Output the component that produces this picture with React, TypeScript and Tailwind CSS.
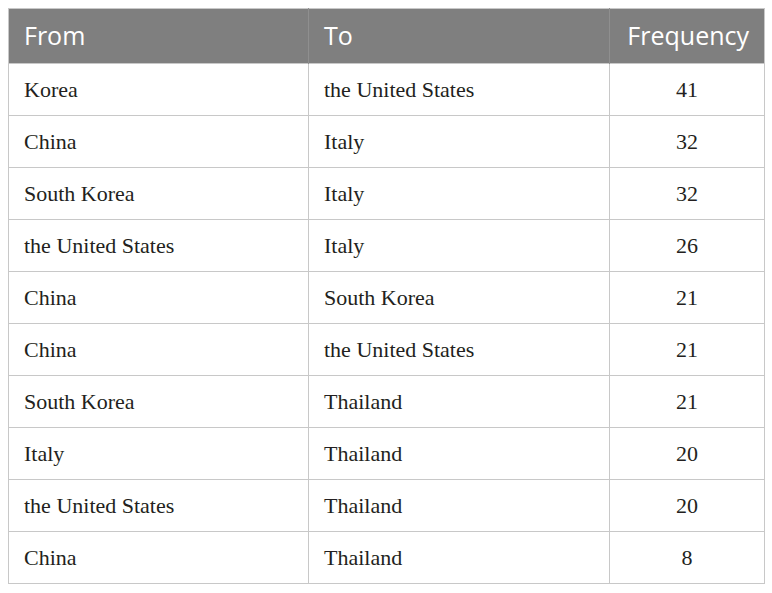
const rows: [string, string, number][] = [
  ['Korea', 'the United States', 41],
  ['China', 'Italy', 32],
  ['South Korea', 'Italy', 32],
  ['the United States', 'Italy', 26],
  ['China', 'South Korea', 21],
  ['China', 'the United States', 21],
  ['South Korea', 'Thailand', 21],
  ['Italy', 'Thailand', 20],
  ['the United States', 'Thailand', 20],
  ['China', 'Thailand', 8],
];

export default function App() {
  return (
    <div className="w-[772px] h-[593px] bg-white pt-2 pl-2">
      <table className="w-[756px] border-collapse border border-[#c8c8c8] table-fixed">
        <colgroup>
          <col className="w-[300px]" />
          <col className="w-[301px]" />
          <col className="w-[155px]" />
        </colgroup>
        <thead>
          <tr className="h-[55px] bg-[#7f7f7f] text-white font-['Open_Sans',sans-serif] text-[25px] font-normal">
            <th className="text-left font-normal pl-[15px] border-r border-[#8f8f8f]">From</th>
            <th className="text-left font-normal pl-[15px] border-r border-[#8f8f8f]">To</th>
            <th className="text-right font-normal pr-[15px]">Frequency</th>
          </tr>
        </thead>
        <tbody className="font-['Liberation_Serif',serif] text-[22px] text-[#231f20]">
          {rows.map(([from, to, freq], i) => (
            <tr key={i} className="h-[52px] border-t border-[#c8c8c8]">
              <td className="pl-[15px] border-r border-[#c8c8c8]">{from}</td>
              <td className="pl-[15px] border-r border-[#c8c8c8]">{to}</td>
              <td className="text-center">{freq}</td>
            </tr>
          ))}
        </tbody>
      </table>
    </div>
  );
}
